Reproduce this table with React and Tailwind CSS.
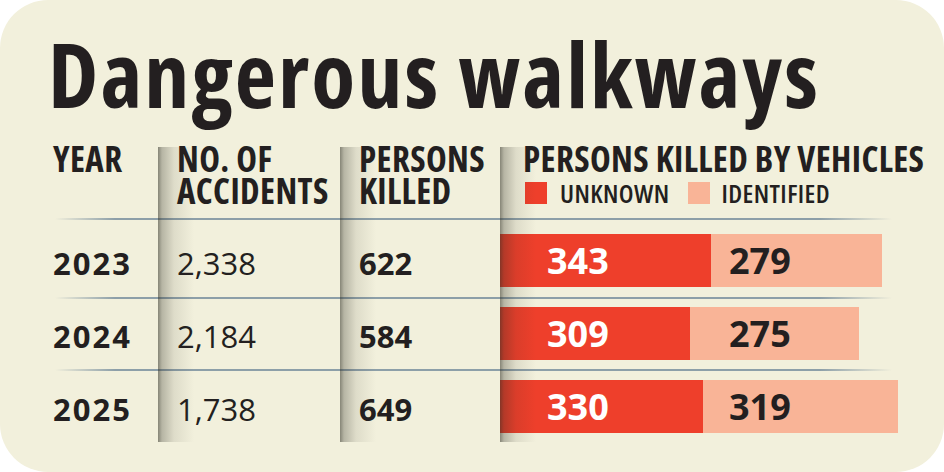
const rows = [
  { year: '2023', accidents: '2,338', killed: '622', unknown: 343, identified: 279 },
  { year: '2024', accidents: '2,184', killed: '584', unknown: 309, identified: 275 },
  { year: '2025', accidents: '1,738', killed: '649', unknown: 330, identified: 319 },
];

// spacing per row so bars land where the print layout has them
const rowBox = ['h-[77px] pt-[14px]', 'h-[70px] pt-[8px]', 'h-[71px] pt-[9px]'];

const PX_PER_PERSON = 0.614;

function Shade() {
  return (
    <div className="pointer-events-none absolute inset-y-0 left-0 w-[36px] bg-[linear-gradient(to_right,rgba(45,45,35,0.55),rgba(45,45,35,0.3)_4px,rgba(45,45,35,0.1)_16px,transparent_36px)]" />
  );
}

function Rule({ className }) {
  return <div className={`h-[2px] ${className}`} />;
}

function Column({ width, shaded, header, cells, rule }) {
  return (
    <div className={`relative flex flex-col ${width}`}>
      <div className="h-[71px]">{header}</div>
      <Rule className={rule} />
      {cells.map((cell, i) => (
        <div key={i}>
          {i > 0 && <Rule className={rule} />}
          <div className={rowBox[i]}>
            <div className="h-[53px]">{cell}</div>
          </div>
        </div>
      ))}
      {shaded && <Shade />}
    </div>
  );
}

function HeadText({ children }) {
  return (
    <div className="-mt-[4px] whitespace-nowrap font-['Open_Sans',sans-serif] text-[35px] font-bold leading-[32px] tracking-[0.4px] text-[#231f20] [font-stretch:75%]">
      {children}
    </div>
  );
}

function Num({ bold, wide, children }) {
  return (
    <div
      className={`pt-[3px] font-['Open_Sans',sans-serif] text-[31px] leading-[53px] text-[#231f20] ${bold ? 'font-bold' : 'font-normal'} ${wide ? 'tracking-[2px]' : ''}`}
    >
      {children}
    </div>
  );
}

function Bar({ unknown, identified }) {
  return (
    <div className="relative h-[53px]">
      <div className="flex h-full">
        <div className="h-full bg-[#ee3f2b]" style={{ width: unknown * PX_PER_PERSON }} />
        <div className="h-full bg-[#f9b497]" style={{ width: identified * PX_PER_PERSON }} />
      </div>
      <div className="absolute inset-0 flex font-['Open_Sans',sans-serif] text-[36px] font-bold leading-[53px]">
        <span className="w-[229px] pl-[47px] text-white">{unknown}</span>
        <span className="text-[#231f20]">{identified}</span>
      </div>
    </div>
  );
}

export default function App() {
  return (
    <div className="h-[472px] w-[944px] bg-white">
      <div className="h-full w-full overflow-hidden rounded-[48px] bg-[#f2f0dc]">
        <h1 className="whitespace-nowrap pl-[48px] pt-[28px] font-['Open_Sans',sans-serif] text-[90px] font-bold leading-[90px] tracking-[2.1px] text-[#231f20] [font-stretch:75%]">
          Dangerous walkways
        </h1>

        <div className="mt-[29px] flex">
          <Column
            width="w-[158px] pl-[53px]"
            rule="-ml-[53px] bg-[linear-gradient(to_right,transparent_55px,#8d9fa8_115px)]"
            header={<HeadText>YEAR</HeadText>}
            cells={rows.map((r) => (
              <Num bold wide>
                {r.year}
              </Num>
            ))}
          />
          <Column
            width="w-[182px]"
            shaded
            rule="bg-[#8d9fa8]"
            header={
              <div className="pl-[19px]">
                <HeadText>
                  NO. OF
                  <br />
                  ACCIDENTS
                </HeadText>
              </div>
            }
            cells={rows.map((r) => (
              <div className="pl-[19px]">
                <Num>{r.accidents}</Num>
              </div>
            ))}
          />
          <Column
            width="w-[160px]"
            shaded
            rule="bg-[#8d9fa8]"
            header={
              <div className="pl-[19px]">
                <HeadText>
                  PERSONS
                  <br />
                  KILLED
                </HeadText>
              </div>
            }
            cells={rows.map((r) => (
              <div className="pl-[19px]">
                <Num bold>{r.killed}</Num>
              </div>
            ))}
          />
          <Column
            width="w-[444px]"
            shaded
            rule="bg-[linear-gradient(to_right,#8d9fa8_320px,transparent_392px)]"
            header={
              <div className="pl-[23px]">
                <HeadText>PERSONS KILLED BY VEHICLES</HeadText>
                <div className="mt-[7px] flex h-[22px] items-center font-['Open_Sans',sans-serif] text-[26px] font-semibold leading-[22px] tracking-[0.4px] text-[#231f20] [font-stretch:75%]">
                  <span className="ml-[2px] h-[22px] w-[22px] bg-[#ee3f2b]" />
                  <span className="ml-[13px]">UNKNOWN</span>
                  <span className="ml-[18px] h-[22px] w-[22px] bg-[#f9b497]" />
                  <span className="ml-[12px]">IDENTIFIED</span>
                </div>
              </div>
            }
            cells={rows.map((r) => (
              <Bar unknown={r.unknown} identified={r.identified} />
            ))}
          />
        </div>
      </div>
    </div>
  );
}
